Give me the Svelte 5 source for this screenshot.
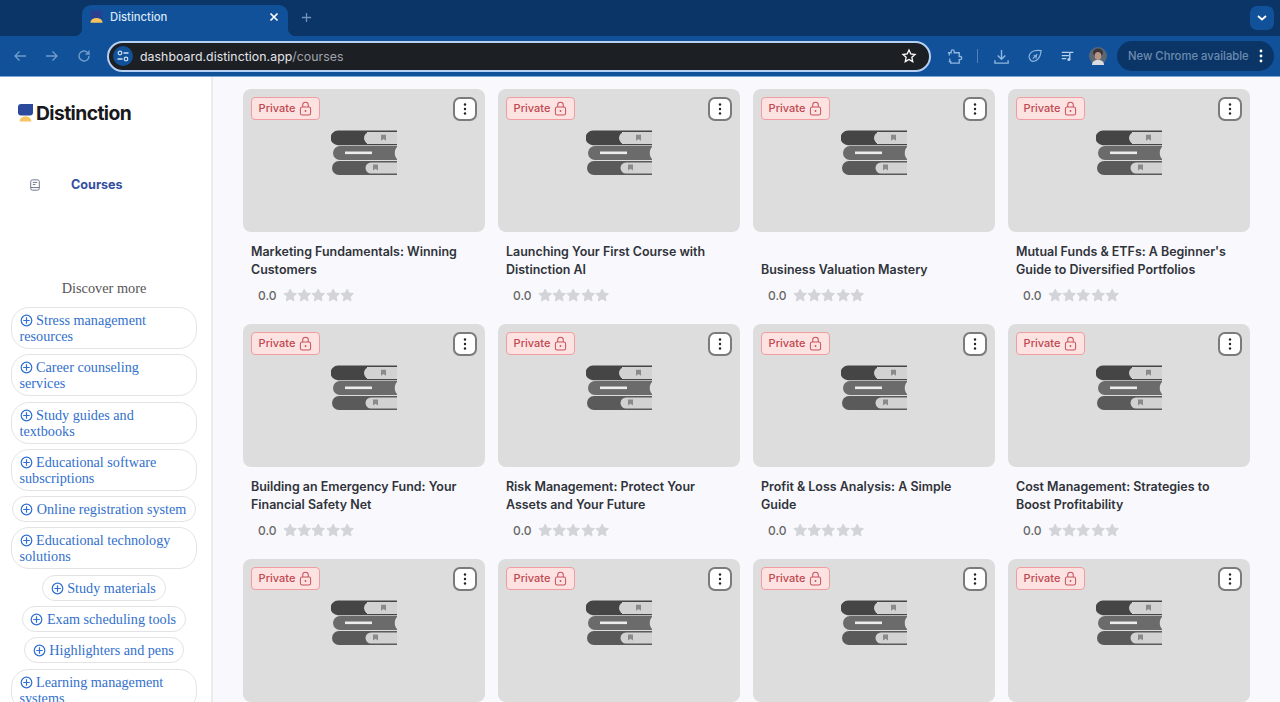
<script>
  const titles = [
    'Marketing Fundamentals: Winning Customers',
    'Launching Your First Course with Distinction AI',
    'Business Valuation Mastery',
    "Mutual Funds & ETFs: A Beginner's Guide to Diversified Portfolios",
    'Building an Emergency Fund: Your Financial Safety Net',
    'Risk Management: Protect Your Assets and Your Future',
    'Profit & Loss Analysis: A Simple Guide',
    'Cost Management: Strategies to Boost Profitability',
    '', '', '', ''
  ];
  const topics = [
    'Stress management resources',
    'Career counseling services',
    'Study guides and textbooks',
    'Educational software subscriptions',
    'Online registration system',
    'Educational technology solutions',
    'Study materials',
    'Exam scheduling tools',
    'Highlighters and pens',
    'Learning management systems'
  ];
</script>

{#snippet star()}
  <svg class="star" viewBox="1 1 22 22"><path d="M12 2.500l2.900 6.200 6.700.8-5 4.700 1.300 6.700-5.900-3.300-5.900 3.300 1.300-6.700-5-4.700 6.700-.8z"/></svg>
{/snippet}

<div class="page">
  <header class="tabstrip">
    <div class="tab">
      <svg class="favicon" viewBox="0 0 16 16">
        <path d="M2 0h12v8.500H2z" fill="#2b3f8f"/>
        <path d="M1.500 13a6.500 5 0 0 1 13 0z" fill="#f7c15c"/>
      </svg>
      <span class="tab-title">Distinction</span>
      <svg class="tab-close" viewBox="0 0 10 10"><path d="M1.500 1.500l7 7M8.500 1.500l-7 7" stroke="#fff" stroke-width="1.700"/></svg>
    </div>
    <svg class="newtab" viewBox="0 0 12 12"><path d="M6 1v10M1 6h10" stroke="#6f93bd" stroke-width="1.400"/></svg>
    <div class="chev"><svg viewBox="0 0 10 6" width="10" height="6"><path d="M1 1l4 3.500L9 1" fill="none" stroke="#fff" stroke-width="1.800"/></svg></div>
  </header>

  <div class="toolbar">
    <div class="navs">
      <svg viewBox="0 0 14 14"><path d="M13 7H2M6.500 2.500L2 7l4.500 4.500" fill="none" stroke="#6f9bcb" stroke-width="1.400"/></svg>
      <svg viewBox="0 0 14 14"><path d="M1 7h11M7.500 2.500L12 7l-4.500 4.500" fill="none" stroke="#6f9bcb" stroke-width="1.400"/></svg>
      <svg viewBox="0 0 14 14"><path d="M12 7a5 5 0 1 1-1.500-3.600L12 5V1.500M12 5H8.500" fill="none" stroke="#6f9bcb" stroke-width="1.400"/></svg>
    </div>
    <div class="omnibox">
      <span class="site">
        <svg viewBox="0 0 14 14" width="14" height="14"><circle cx="4" cy="4" r="1.800" fill="none" stroke="#cfe0f5" stroke-width="1.200"/><path d="M7.500 4h5M1.500 10h5" stroke="#cfe0f5" stroke-width="1.300"/><circle cx="10" cy="10" r="1.800" fill="none" stroke="#cfe0f5" stroke-width="1.200"/></svg>
      </span>
      <span class="url"><span class="host">dashboard.distinction.app</span><span class="path">/courses</span></span>
      <svg class="bookmark" viewBox="0 0 24 24"><path d="M12 3l2.700 6 6.300.7-4.700 4.300 1.300 6.500L12 17.200l-5.600 3.300 1.300-6.500L3 9.700 9.300 9z" fill="none" stroke="#fff" stroke-width="2"/></svg>
    </div>
    <div class="tools">
      <svg class="t-ext" viewBox="0 0 18 18"><path d="M2 5h3.500V3.600a1.600 1.600 0 0 1 3.200 0V5H14v4h1a1.700 1.700 0 0 1 0 3.400h-1V16H5v-1.500H2.800M3.500 5v3M4 11v3.500" fill="none" stroke="#8fb6e0" stroke-width="1.400"/></svg>
      <span class="sep"></span>
      <svg class="t-dl" viewBox="0 0 18 18"><path d="M9 2v9.500M5 8l4 4 4-4M2 13v3h14v-3" fill="none" stroke="#8fb6e0" stroke-width="1.500"/></svg>
      <svg class="t-leaf" viewBox="0 0 18 18"><path d="M16 3c-5-1-11 0-13 4-2 4 1 8 4 8 5 0 8-5 9-12zM6.500 12l5-5M7.500 8.500l3 .5-.5 3" fill="none" stroke="#8fb6e0" stroke-width="1.300"/></svg>
      <svg class="t-music" viewBox="0 0 18 18"><path d="M2 5h8M2 8.500h8M2 12h5M11 13V5h4" fill="none" stroke="#b9d2ee" stroke-width="1.500"/><circle cx="10" cy="13" r="1.700" fill="#b9d2ee"/></svg>
      <svg class="avatar" viewBox="0 0 18 18">
        <circle cx="9" cy="9" r="9" fill="#5b6675"/>
        <ellipse cx="9" cy="5.500" rx="5" ry="4" fill="#3a3538"/>
        <ellipse cx="9" cy="9" rx="3.300" ry="4" fill="#b89583"/>
        <path d="M3 18c0-4 3-5 6-5s6 1 6 5z" fill="#d9dde2"/>
      </svg>
      <div class="update">
        <span>New Chrome available</span>
        <svg viewBox="0 0 4 14" width="4" height="14"><circle cx="2" cy="2" r="1.400" fill="#fff"/><circle cx="2" cy="7" r="1.400" fill="#fff"/><circle cx="2" cy="12" r="1.400" fill="#fff"/></svg>
      </div>
    </div>
  </div>

  <div class="body">
    <aside class="sidebar">
      <div class="logo">
        <svg viewBox="0 0 15 18" width="15" height="18">
          <path d="M3 0H15v8.500a3 3 0 0 1-3 3H3a3 3 0 0 1-3-3V3a3 3 0 0 1 3-3z" fill="#2c4a9c"/>
          <path d="M1.500 17.500a6 5.200 0 0 1 12 0z" fill="#f8c463"/>
        </svg>
        <span>Distinction</span>
      </div>
      <div class="nav">
        <svg viewBox="0 0 14 14" width="12" height="12"><rect x="2" y="1" width="10" height="12" rx="2" fill="none" stroke="#56617e" stroke-width="1"/><path d="M2 10h10M4.500 4h5M4.500 6.500h3" stroke="#56617e" stroke-width="1"/></svg>
        <span>Courses</span>
      </div>
      <h2>Discover more</h2>
      <div class="pills">
        {#each topics as t}
          <a class="pill" href="#top">
            <svg viewBox="0 0 14 14" width="13" height="13"><circle cx="7" cy="7" r="5.700" fill="none" stroke="#2f6fd0" stroke-width="1.300"/><path d="M7 3.500v7M3.500 7h7" stroke="#2f6fd0" stroke-width="1.300"/></svg>
            {t}
          </a>
        {/each}
      </div>
    </aside>

    <main class="grid">
      {#each titles as title}
        <article class="card">
          <div class="thumb">
            <div class="thumb-top">
              <span class="badge">Private
                <svg viewBox="0 0 14 16" width="13" height="15"><rect x="1.500" y="6.500" width="11" height="8.500" rx="2" fill="none" stroke="#c8525a" stroke-width="1.100"/><path d="M4 6.500V4.300a3 3 0 0 1 6 0v2.200" fill="none" stroke="#c8525a" stroke-width="1.100"/><circle cx="7" cy="10.700" r="1" fill="#c8525a"/></svg>
              </span>
              <button class="menu" aria-label="More">
                <svg viewBox="0 0 4 14" width="4" height="14"><circle cx="2" cy="2.500" r="1.200" fill="#222"/><circle cx="2" cy="7" r="1.200" fill="#222"/><circle cx="2" cy="11.500" r="1.200" fill="#222"/></svg>
              </button>
            </div>
            <svg class="books" viewBox="0 0 66 45" width="66" height="45">
              <path d="M7 0.500H66V2H36v12h30v1.200H7a7 7 0 0 1 0-14.700z" fill="#454545"/>
              <path d="M39 2H66V14H39a6 6 0 0 1 0-12z" fill="#d2d2d2"/>
              <path d="M50 4.800h5v6l-2.500-1.800-2.500 1.800z" fill="#8a8a8a"/>
              <path d="M9 16H66V17c-3 3-3 9 0 12v1H9a7 7 0 0 1 0-14z" fill="#6b6b6b"/>
              <rect x="14" y="21.500" width="27" height="2.600" fill="#ececec"/>
              <path d="M8 31H66V45H8a7 7 0 0 1 0-14z" fill="#5a5a5a"/>
              <path d="M40 32.500H66V43.500H40a5.500 5.500 0 0 1 0-11z" fill="#d2d2d2"/>
              <path d="M42 34.500h5v6l-2.500-1.800-2.500 1.800z" fill="#8a8a8a"/>
            </svg>
          </div>
          <h3>{title}</h3>
          <div class="rating">
            <span>0.0</span>
            <div class="stars">
              {@render star()}{@render star()}{@render star()}{@render star()}{@render star()}
            </div>
          </div>
        </article>
      {/each}
    </main>
  </div>
</div>

<style>
  :global(body) { margin: 0; background: #fff; }
  .page { width: 1280px; height: 702px; overflow: hidden; display: flex; flex-direction: column; font-family: Inter, "Liberation Sans", sans-serif; }

  .tabstrip { height: 36px; flex: none; background: #0b3566; display: flex; align-items: flex-end; padding-left: 82px; position: relative; box-sizing: border-box; }
  .tab { width: 206px; height: 31px; background: #10519a; border-radius: 9px 9px 0 0; display: flex; align-items: center; box-sizing: border-box; padding: 0 9px 7px 7px; position: relative; }
  .tab::before, .tab::after { content: ""; position: absolute; bottom: 0; width: 8px; height: 8px; }
  .tab::before { left: -8px; background: radial-gradient(circle at 0 0, transparent 8px, #10519a 8.500px); }
  .tab::after { right: -8px; background: radial-gradient(circle at 100% 0, transparent 8px, #10519a 8.500px); }
  .favicon { width: 15px; height: 16px; margin-top: 1px; }
  .tab-title { margin-left: 6px; font-size: 11.300px; color: #d8e6f7; flex: 1; font-weight: 500; }
  .tab-close { width: 10px; height: 10px; }
  .newtab { width: 11px; height: 11px; margin: 0 0 13px 13px; }
  .chev { position: absolute; right: 6px; top: 6px; width: 24px; height: 24px; border-radius: 7px; background: #10519a; display: flex; align-items: center; justify-content: center; }

  .toolbar { height: 40px; flex: none; background: #10519a; border-bottom: 1px solid #7aa5d6; display: flex; align-items: center; }
  .navs { display: flex; width: 107px; flex: none; padding-left: 13px; box-sizing: border-box; gap: 18px; }
  .navs svg { width: 14px; height: 14px; }
  .omnibox { width: 824px; height: 31px; box-sizing: border-box; border: 2px solid #b6d0f2; border-radius: 16px; background: #1c1f24; display: flex; align-items: center; padding-left: 4px; padding-right: 12px; }
  .site { width: 20px; height: 20px; border-radius: 50%; background: #10519a; display: flex; align-items: center; justify-content: center; flex: none; }
  .url { margin-left: 7px; font-size: 12.300px; flex: 1; letter-spacing: 0.05px; }
  .host { color: #e4e6ea; }
  .path { color: #a0a4aa; }
  .bookmark { width: 16px; height: 16px; }
  .tools { display: flex; align-items: center; flex: 1; height: 100%; }
  .tools svg { flex: none; }
  .t-ext { width: 17px; height: 17px; margin-left: 15px; }
  .sep { width: 1px; height: 14px; background: #4f82bb; margin-left: 14px; }
  .t-dl { width: 17px; height: 17px; margin-left: 15px; }
  .t-leaf { width: 16px; height: 16px; margin-left: 17px; }
  .t-music { width: 16px; height: 16px; margin-left: 17px; }
  .avatar { width: 18px; height: 18px; margin-left: 13px; }
  .update { margin-left: 10px; width: 157px; height: 30px; box-sizing: border-box; border-radius: 15px; background: #0b3566; display: flex; align-items: center; justify-content: space-between; padding: 0 11px; color: #6c8bb0; font-size: 11.300px; font-weight: 500; }

  .body { flex: 1; min-height: 0; display: flex; background: #f9f9fd; overflow: hidden; }
  .sidebar { width: 213px; flex: none; box-sizing: border-box; background: #fff; border-right: 2px solid #ececee; overflow: hidden; }
  .logo { display: flex; align-items: center; gap: 3px; padding: 24px 0 0 18px; font-size: 19.300px; font-weight: 700; letter-spacing: -0.6px; color: #18191c; line-height: 24px; }
  .nav { display: flex; align-items: center; margin: 52px 0 0 29px; color: #34509e; font-size: 12.600px; font-weight: 700; line-height: 16px; }
  .nav span { margin-left: 30px; }
  h2 { margin: 86px 0 0; width: 208px; text-align: center; font: 400 14.300px/18px "Liberation Serif", serif; color: #555; }
  .pills { width: 208px; padding: 0 11px; box-sizing: border-box; margin-top: 10px; display: flex; flex-wrap: wrap; justify-content: center; gap: 5.300px 0; }
  .pill { display: block; box-sizing: border-box; max-width: 186px; border: 1px solid #e3e3e6; border-radius: 18px; padding: 4px 9px 4px 7.500px; font: 400 14.200px/16px "Liberation Serif", serif; color: #3270cc; text-decoration: none; }
  .pill svg { vertical-align: -2px; }

  .grid { flex: 1; display: grid; grid-template-columns: repeat(4, 242px); column-gap: 13px; grid-auto-rows: 235px; padding: 12px 0 0 30px; align-content: start; }
  .card { min-width: 0; }
  .thumb { height: 143px; background: #dddddd; border-radius: 8px; padding: 8px 8px 0; box-sizing: border-box; position: relative; }
  .thumb-top { display: flex; justify-content: space-between; align-items: flex-start; }
  .badge { height: 23px; width: 69px; box-sizing: border-box; padding-bottom: 1px; display: flex; align-items: center; justify-content: center; gap: 4px; background: #fde2e2; border: 1px solid #ef9da0; border-radius: 4px; color: #c0474f; font-size: 11px; font-weight: 500; }
  .menu { width: 24px; height: 24px; padding: 0; box-sizing: border-box; background: #fff; border: 2px solid #7b7b7b; border-radius: 7px; display: flex; align-items: center; justify-content: center; }
  .books { position: absolute; left: 88px; top: 41px; }
  h3 { margin: 11px 8px 0; height: 36px; display: flex; align-items: flex-end; font-size: 12.450px; font-weight: 600; line-height: 18px; color: #30333a; }
  .rating { display: flex; align-items: center; margin: 9px 0 0 15px; gap: 6px; font-size: 12px; font-weight: 500; color: #666; }
  .stars { display: flex; }
  .star { width: 14.400px; height: 14.400px; fill: #d3d4d9; stroke: #d3d4d9; stroke-width: 1.500px; stroke-linejoin: round; flex: none; }
</style>
